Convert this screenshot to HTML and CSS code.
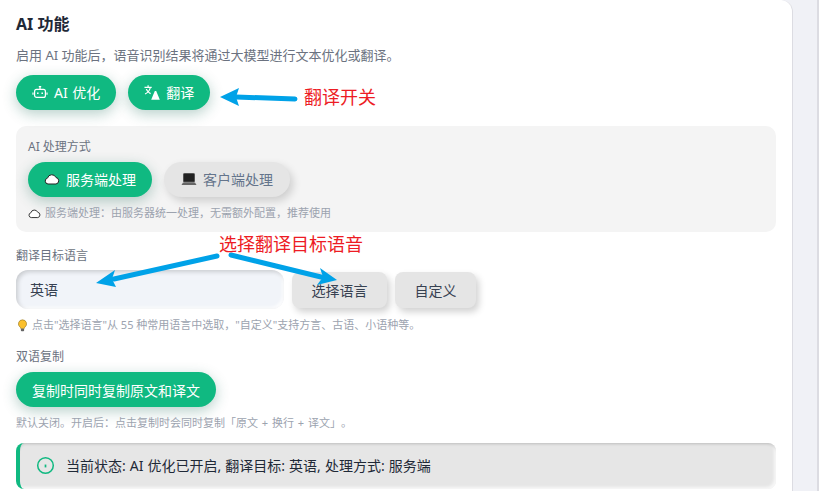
FILE: index.html
```html
<!DOCTYPE html>
<html lang="zh-CN">
<head>
    <meta charset="UTF-8">
    <meta name="viewport" content="width=device-width, initial-scale=1.0">
    <title>AI 功能</title>
    <link rel="stylesheet" href="styles.css">
</head>
<body>
    <div class="card">
        <h2>AI 功能</h2>
        <p class="desc">启用 AI 功能后，语音识别结果将通过大模型进行文本优化或翻译。</p>

        <div class="btn-row">
            <button class="pill on">
                <svg class="icon" viewBox="0 0 16 16" fill="none" stroke="currentColor" stroke-width="1.2"><rect x="2.600" y="5.400" width="10.800" height="8" rx="2"/><path d="M8 5.200V3M6.800 2.600h2.400"/><path d="M1 8.600v2.200M15 8.600v2.200"/><path d="M5.800 8.600v1.400M10.200 8.600v1.400" stroke-width="1.500"/></svg>
                AI 优化
            </button>
            <button class="pill on">
                <svg class="icon" viewBox="0 0 16 16" fill="currentColor"><path d="M.500 2.800h3V1.300h1.200v1.500h3V4H6.800C6.400 5.400 5.700 6.700 4.900 7.700c.6.500 1.300 1 2 1.400l-.5 1.100c-.8-.4-1.500-1-2.200-1.600-.8.800-1.800 1.500-2.900 2l-.5-1.100c1-.4 1.900-1 2.600-1.700C2.700 7 2.100 6 1.700 5h1.300c.3.700.7 1.400 1.200 2 .6-.8 1.100-1.900 1.400-3H.500z"/><path d="M10.800 7h1.400l3.600 8.800H7.200z"/></svg>
                翻译
            </button>
        </div>

        <div class="panel">
            <div class="label">AI 处理方式</div>
            <div class="btn-row">
                <button class="pill on">
                    <svg class="icon" viewBox="0 0 16 16"><path d="M4 13a3 3 0 0 1-.5-5.900A4.500 4.500 0 0 1 12 6.500 3.300 3.300 0 0 1 12 13z" fill="#fff" stroke="#222" stroke-width="1"/></svg>
                    服务端处理
                </button>
                <button class="pill off">
                    <svg class="icon" viewBox="0 0 16 16"><rect x="2.500" y="2.500" width="11" height="8.500" rx=".8" fill="#222" stroke="#555"/><path d="M2 11.500h12l1.500 2.500H.5z" fill="#666"/></svg>
                    客户端处理
                </button>
            </div>
            <div class="hint tip-cloud">
                <svg class="icon-sm" viewBox="0 0 16 16"><path d="M4 13a3 3 0 0 1-.5-5.900A4.500 4.500 0 0 1 12 6.500 3.300 3.300 0 0 1 12 13z" fill="#fff" stroke="#333" stroke-width="1.200"/></svg>
                服务端处理：由服务器统一处理，无需额外配置，推荐使用
            </div>
        </div>

        <div class="label target-label">翻译目标语言</div>
        <div class="lang-row">
            <input class="lang-input" type="text" value="英语">
            <button class="btn-gray pick">选择语言</button>
            <button class="btn-gray custom">自定义</button>
        </div>
        <div class="hint lang-hint">
            <svg class="icon-sm" viewBox="0 0 16 16"><path d="M8 1a5 5 0 0 0-3 9c.6.500.9 1 .9 1.800h4.200c0-.8.300-1.300.9-1.800A5 5 0 0 0 8 1z" fill="#fbc02d" stroke="#8a6d1d" stroke-width=".7"/><rect x="6" y="12" width="4" height="3" rx="1" fill="#666"/></svg>
            点击"选择语言"从 55 种常用语言中选取，"自定义"支持方言、古语、小语种等。
        </div>

        <div class="label copy-label">双语复制</div>
        <button class="pill on copy-btn">复制时同时复制原文和译文</button>
        <div class="hint copy-hint">默认关闭。开启后：点击复制时会同时复制「原文 + 换行 + 译文」。</div>

        <div class="alert">
            <svg class="alert-icon" viewBox="0 0 20 20" fill="none" stroke="#10b981" stroke-width="1.600"><circle cx="10" cy="10" r="8.200"/><path d="M10 9v3" stroke-width="1.800"/></svg>
            当前状态: AI 优化已开启, 翻译目标: 英语, 处理方式: 服务端
        </div>
    </div>
    <div class="side"></div>

    <!-- annotations drawn on top of the screenshot -->
    <svg class="arrows" viewBox="0 0 819 491" fill="none">
        <g stroke="#00a2e8" stroke-width="5" stroke-linecap="round">
            <path d="M295 99 236 97"/>
            <path d="M217 256 114 279"/>
            <path d="M231 255 321 277"/>
        </g>
        <g fill="#00a2e8">
            <path d="M220 97 239 88 236 97 239 106z"/>
            <path d="M96 283 115 270 112 279 116 287z"/>
            <path d="M337 280 320 268 323 277 317 285z"/>
        </g>
    </svg>
    <div class="note note-a">翻译开关</div>
    <div class="note note-b">选择翻译目标语音</div>
</body>
</html>
```

FILE: styles.css
```css
* {
    box-sizing: border-box;
}
html, body {
    height: 491px;
    overflow: hidden;
}
body {
    margin: 0;
    display: flex;
    background-color: #f0f1f6;
    font-family: "Noto Sans", "Noto Sans CJK SC", sans-serif;
    color: #374151;
    position: relative;
    text-spacing-trim: space-all;
}
.card {
    width: 793px;
    height: 491px;
    flex-shrink: 0;
    padding: 0 16px;
    background-color: white;
    border-right: 1px solid #dcdce2;
    border-top-right-radius: 12px;
    overflow: hidden;
}
.side {
    flex: 1;
    border-right: 2px solid #dcdce2;
}
h2 {
    margin: 12px 0 0;
    font-size: 16px;
    line-height: 24px;
    font-weight: 700;
    color: #1f2937;
}
.desc {
    margin: 9px 0 0;
    font-size: 13px;
    line-height: 20px;
    color: #6b7280;
}
.btn-row {
    display: flex;
    gap: 12px;
}
.card > .btn-row {
    margin-top: 10px;
}
.pill {
    display: flex;
    align-items: center;
    justify-content: center;
    gap: 6px;
    height: 35px;
    padding: 0 16px;
    padding-bottom: 1px;
    border: none;
    border-radius: 18px;
    font-family: inherit;
    font-size: 14px;
    font-weight: 400;
    word-spacing: 1px;
    cursor: pointer;
}
.on {
    background-color: #10b981;
    color: white;
    box-shadow: 0 4px 14px rgba(16, 100, 80, 0.3);
}
.off {
    padding: 0 17px 1px;
    background-color: #e5e5e5;
    color: #64748b;
    box-shadow: 3px 4px 8px rgba(0, 0, 0, 0.16);
}
.icon {
    width: 16px;
    height: 16px;
    flex-shrink: 0;
}
.icon-sm {
    width: 13px;
    height: 13px;
    flex-shrink: 0;
}
.panel {
    height: 106px;
    margin-top: 16px;
    padding: 12px;
    background-color: #f4f4f4;
    border-radius: 10px;
}
.label {
    font-size: 12px;
    line-height: 18px;
    color: #6b7280;
}
.panel .btn-row {
    margin-top: 6px;
}
.hint {
    display: flex;
    align-items: center;
    gap: 3px;
    font-size: 11px;
    line-height: 16px;
    color: #9ca3af;
}
.tip-cloud {
    gap: 4px;
    margin-top: 8px;
}
.target-label {
    margin-top: 15px;
}
.lang-row {
    display: flex;
    align-items: center;
    gap: 8px;
    margin-top: 5px;
}
.lang-input {
    width: 268px;
    height: 39px;
    padding: 0 14px 2px;
    border: none;
    border-radius: 12px;
    background-color: #f1f4f9;
    box-shadow: inset 2px 2px 4px rgba(0, 0, 0, 0.16), inset -2px -2px 3px rgba(255, 255, 255, 0.8);
    font-family: inherit;
    font-size: 14px;
    color: #374151;
}
.btn-gray {
    height: 36px;
    border: none;
    border-radius: 8px;
    background-color: #e5e5e5;
    box-shadow: 3px 4px 7px rgba(0, 0, 0, 0.18);
    font-family: inherit;
    font-size: 14px;
    color: #374151;
}
.pick {
    width: 95px;
}
.custom {
    width: 81px;
}
.lang-hint {
    margin-top: 8px;
}
.copy-label {
    margin-top: 15px;
}
.copy-btn {
    width: 200px;
    margin-top: 6px;
    padding: 0;
}
.copy-hint {
    margin-top: 8px;
    word-spacing: 1px;
}
.alert {
    display: flex;
    align-items: center;
    gap: 11px;
    height: 46px;
    margin-top: 12px;
    padding-left: 16px;
    padding-bottom: 2px;
    border-left: 4px solid #10b981;
    border-radius: 8px;
    background-color: #e6e6e6;
    box-shadow: inset 0 3px 3px -2px rgba(0, 0, 0, 0.18), inset -2px -2px 3px rgba(255, 255, 255, 0.7);
    font-size: 14px;
    word-spacing: 0.4px;
    color: #1f2937;
}
.alert-icon {
    width: 19px;
    height: 19px;
    flex-shrink: 0;
}
.arrows {
    position: absolute;
    top: 0;
    left: 0;
    width: 819px;
    height: 491px;
    pointer-events: none;
}
.note {
    position: absolute;
    font-size: 18px;
    line-height: 24px;
    color: #ed1c24;
    white-space: nowrap;
}
.note-a {
    left: 304px;
    top: 85px;
}
.note-b {
    left: 219px;
    top: 232px;
}
```
